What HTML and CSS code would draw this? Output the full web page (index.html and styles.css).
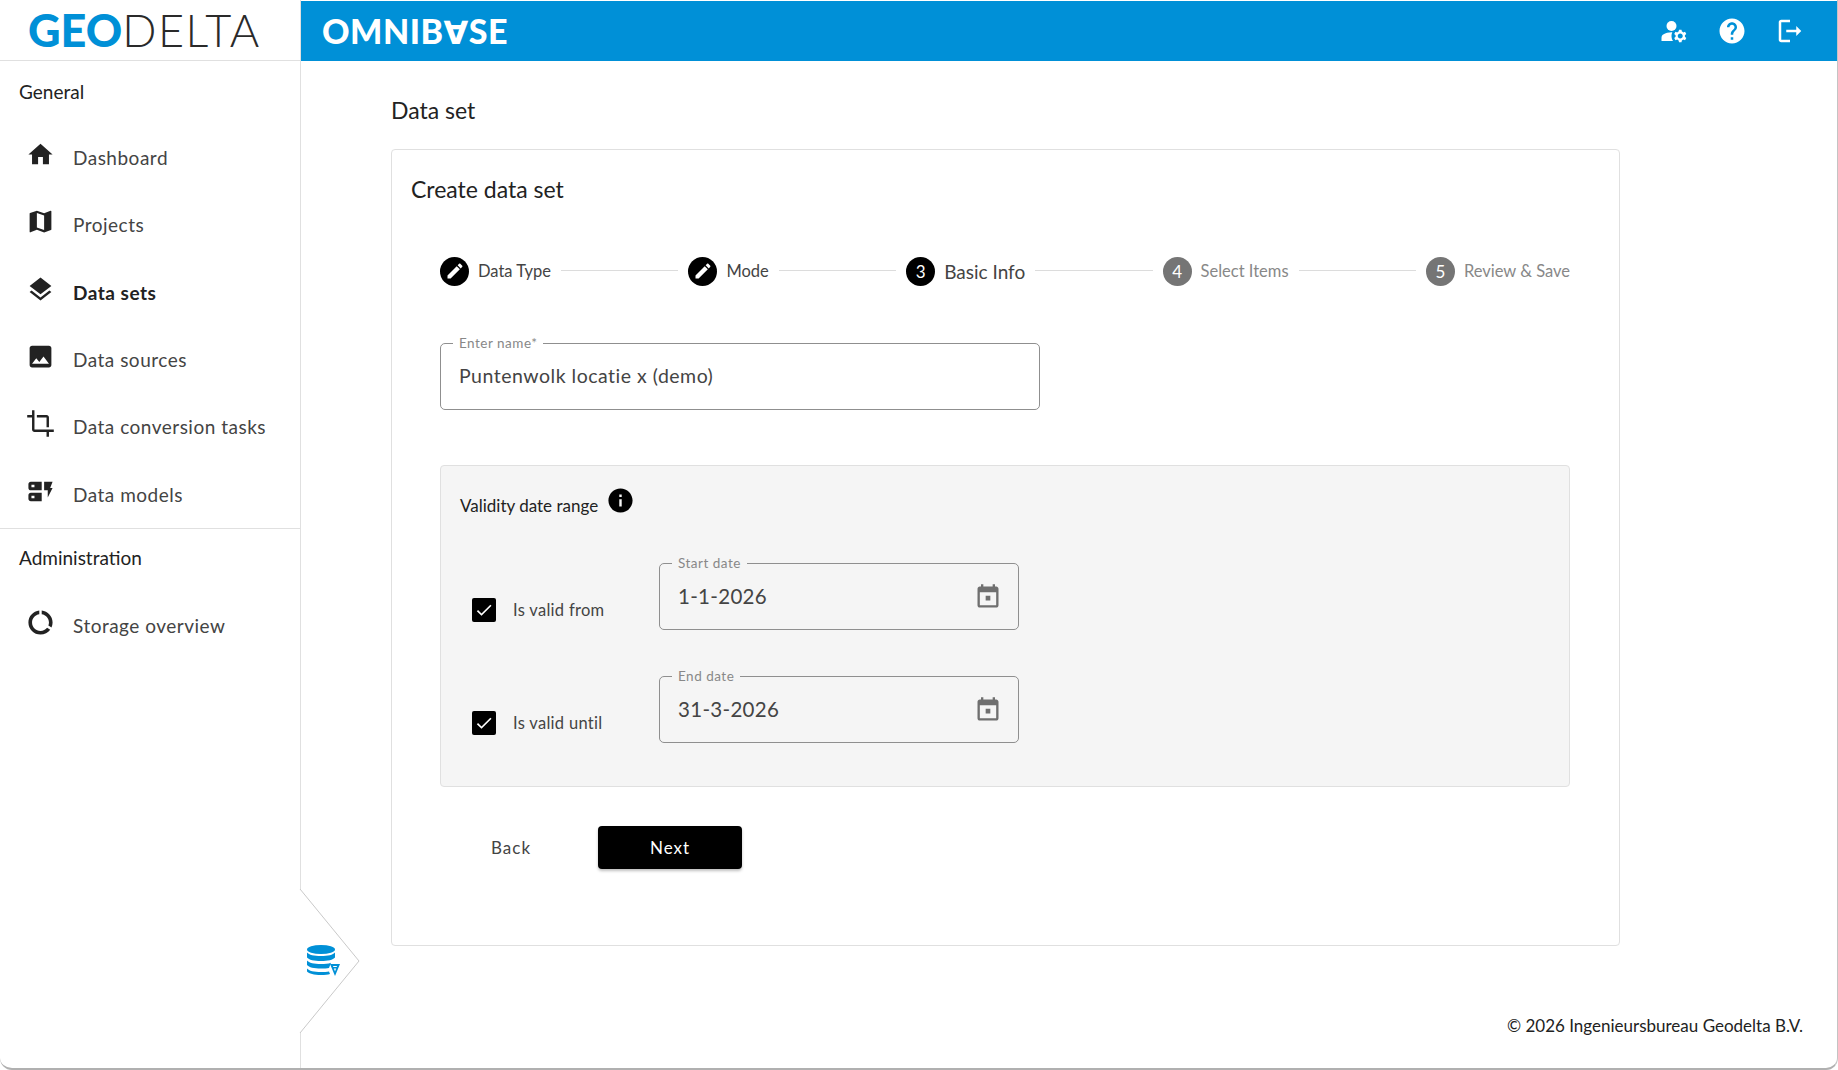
FILE: index.html
```html
<!DOCTYPE html>
<html lang="en">
<head>
  <meta charset="UTF-8">
  <meta name="viewport" content="width=device-width, initial-scale=1.0">
  <title>Omnibase - Data set</title>
  <link rel="stylesheet" href="styles.css">
</head>
<body>

  <svg class="sprite" xmlns="http://www.w3.org/2000/svg">
    <symbol id="i-home" viewBox="0 0 24 24"><path d="M10 20v-6h4v6h5v-8h3L12 3 2 12h3v8z"/></symbol>
    <symbol id="i-map" viewBox="0 0 24 24"><path d="M20.5 3l-.16.03L15 5.1 9 3 3.36 4.9c-.21.07-.36.25-.36.48V20.5c0 .28.22.5.5.5l.16-.03L9 18.9l6 2.1 5.64-1.9c.21-.07.36-.25.36-.48V3.5c0-.28-.22-.5-.5-.5zM15 19l-6-2.11V5l6 2.11V19z"/></symbol>
    <symbol id="i-layers" viewBox="0 0 24 24"><path d="M11.99 18.54l-7.37-5.73L3 14.07l9 7 9-7-1.63-1.27-7.38 5.74zM12 16l7.36-5.73L21 9l-9-7-9 7 1.63 1.27L12 16z"/></symbol>
    <symbol id="i-image" viewBox="0 0 24 24"><path d="M21 19V5c0-1.1-.9-2-2-2H5c-1.1 0-2 .9-2 2v14c0 1.1.9 2 2 2h14c1.1 0 2-.9 2-2zM8.5 13.5l2.5 3.01L14.5 12l4.5 6H5l3.5-4.5z"/></symbol>
    <symbol id="i-crop" viewBox="0 0 24 24"><path d="M17 15h2V7c0-1.1-.9-2-2-2H9v2h8v8zM7 17V1H5v4H1v2h4v10c0 1.1.9 2 2 2h10v4h2v-4h4v-2H7z"/></symbol>
    <symbol id="i-models" viewBox="0 0 24 24"><path fill-rule="evenodd" d="M13 4H4c-1.1 0-2 .9-2 2v3c0 1.1.9 2 2 2h9V4zM7 8.5H4.5v-2H7v2zM13 13H4c-1.1 0-2 .9-2 2v3c0 1.1.9 2 2 2h9v-7zM7 17.500H4.500v-2H7v2zM15 4h7l-2 5h2l-4 8v-6h-3z"/></symbol>
    <symbol id="i-usage" viewBox="0 0 24 24"><path d="M13 2.05v3.03c3.39.49 6 3.39 6 6.92 0 .9-.18 1.75-.48 2.54l2.6 1.53c.56-1.24.88-2.62.88-4.07 0-5.18-3.95-9.45-9-9.95zM12 19c-3.87 0-7-3.13-7-7 0-3.53 2.61-6.43 6-6.92V2.05c-5.06.5-9 4.76-9 9.95 0 5.52 4.47 10 9.99 10 3.31 0 6.24-1.61 8.06-4.09l-2.6-1.53C16.17 17.98 14.21 19 12 19z"/></symbol>
    <symbol id="i-account" viewBox="0 0 24 24"><circle cx="10" cy="8" r="4"/><path d="M10.67 13.02c-.22-.01-.44-.02-.67-.02-2.42 0-4.68.67-6.61 1.82-.88.52-1.39 1.5-1.39 2.53V20h9.26c-.79-1.13-1.26-2.51-1.26-4 0-1.07.25-2.07.67-2.98zM20.75 16c0-.22-.03-.42-.06-.63l1.14-1.01-1-1.73-1.45.49c-.32-.27-.68-.48-1.08-.63L18 11h-2l-.3 1.49c-.4.15-.76.36-1.08.63l-1.45-.49-1 1.73 1.14 1.01c-.03.21-.06.41-.06.63s.03.42.06.63l-1.14 1.01 1 1.73 1.45-.49c.32.27.68.48 1.08.63L16 21h2l.3-1.49c.4-.15.76-.36 1.08-.63l1.45.49 1-1.73-1.14-1.01c.03-.21.06-.41.06-.63zM17 18c-1.1 0-2-.9-2-2s.9-2 2-2 2 .9 2 2-.9 2-2 2z"/></symbol>
    <symbol id="i-help" viewBox="0 0 24 24"><path d="M12 2C6.48 2 2 6.48 2 12s4.48 10 10 10 10-4.48 10-10S17.52 2 12 2zm1 17h-2v-2h2v2zm2.07-7.75l-.9.92C13.45 12.9 13 13.5 13 15h-2v-.5c0-1.1.45-2.1 1.17-2.83l1.24-1.26c.37-.36.59-.86.59-1.41 0-1.1-.9-2-2-2s-2 .9-2 2H8c0-2.21 1.79-4 4-4s4 1.79 4 4c0 .88-.36 1.68-.93 2.25z"/></symbol>
    <symbol id="i-logout" viewBox="0 0 24 24"><path d="M5 5h7V3H5c-1.100 0-2 .9-2 2v14c0 1.100.9 2 2 2h7v-2H5V5zm16 7l-4-4v3H9v2h8v3l4-4z"/></symbol>
    <symbol id="i-edit" viewBox="0 0 24 24"><path d="M3 17.250V21h3.750L17.810 9.940l-3.750-3.750L3 17.250zM20.710 7.040c.39-.39.39-1.020 0-1.410l-2.340-2.340c-.39-.39-1.020-.39-1.410 0l-1.830 1.830 3.750 3.750 1.830-1.830z"/></symbol>
    <symbol id="i-event" viewBox="0 0 24 24"><path d="M19 3h-1V1h-2v2H8V1H6v2H5c-1.110 0-1.990.9-1.990 2L3 19c0 1.100.89 2 2 2h14c1.100 0 2-.9 2-2V5c0-1.100-.9-2-2-2zm0 16H5V8h14v11zM10 11h4v4h-4z"/></symbol>
    <symbol id="i-info" viewBox="0 0 24 24"><path d="M12 2C6.480 2 2 6.480 2 12s4.480 10 10 10 10-4.480 10-10S17.520 2 12 2zm1 15h-2v-6h2v6zm0-8h-2V7h2v2z"/></symbol>
    <symbol id="i-check" viewBox="0 0 24 24"><path d="M9 16.170L4.830 12l-1.420 1.410L9 19 21 7l-1.410-1.410z"/></symbol>
  </svg>

  <div class="app">
    <header class="topbar">
      <div class="brand"><span class="brand-geo">GEO</span><span class="brand-delta">DELTA</span></div>
      <div class="appbar">
        <div class="product">OMNIB<span class="product-a">∀</span>SE</div>
        <div class="appbar-actions">
          <svg class="icon-top"><use href="#i-account"/></svg>
          <svg class="icon-top"><use href="#i-help"/></svg>
          <svg class="icon-top"><use href="#i-logout"/></svg>
        </div>
      </div>
    </header>

    <div class="body-row">
      <aside class="sidebar">
        <div class="nav-section">
          <div class="nav-title">General</div>
          <a class="nav-item"><svg class="nav-icon"><use href="#i-home"/></svg>Dashboard</a>
          <a class="nav-item"><svg class="nav-icon"><use href="#i-map"/></svg>Projects</a>
          <a class="nav-item active"><svg class="nav-icon"><use href="#i-layers"/></svg>Data sets</a>
          <a class="nav-item"><svg class="nav-icon"><use href="#i-image"/></svg>Data sources</a>
          <a class="nav-item"><svg class="nav-icon"><use href="#i-crop"/></svg>Data conversion tasks</a>
          <a class="nav-item"><svg class="nav-icon"><use href="#i-models"/></svg>Data models</a>
        </div>
        <div class="nav-section second">
          <div class="nav-title">Administration</div>
          <a class="nav-item"><svg class="nav-icon"><use href="#i-usage"/></svg>Storage overview</a>
        </div>

        <!-- chevron sits over the sidebar edge -->
        <div class="switcher">
          <svg class="switcher-shape" viewBox="0 0 62 145">
            <path d="M1 0 L60 72 L1 144" fill="#fff" stroke="#c9c9c9" stroke-width="1"/>
          </svg>
          <svg class="switcher-logo" viewBox="0 0 34 32">
            <ellipse cx="14" cy="4.500" rx="14" ry="4.500" fill="#0090d7"/>
            <path d="M0 7.500c2 2.500 7 3.500 14 3.500s12-1 14-3.500v5c-2 2.500-7 3.500-14 3.500S2 15 0 12.500z" fill="#0090d7"/>
            <path d="M0 15.500c2 2.500 7 3.500 14 3.500 4 0 7-.3 10-1.300l-2 5.300c-2 .4-5 .5-8 .5-7 0-12-1-14-3.500z" fill="#0090d7"/>
            <path d="M0 23.500c2 2.500 7 3.500 14 3.500 3 0 6-.2 8-.6l1 2.600c-2 .6-5 1-9 1-7 0-12-1.500-14-3.500z" fill="#0090d7"/>
            <path d="M23 19h10l-5 12z M26 21l2 5.500 2-5.500z" fill="#0090d7" fill-rule="evenodd"/>
            <rect x="25" y="22" width="6" height="1.500" fill="#0090d7"/>
          </svg>
        </div>
      </aside>

      <main class="content">
        <div class="page">
          <h1 class="page-title">Data set</h1>

          <section class="card">
            <h2 class="card-title">Create data set</h2>

            <div class="stepper">
              <div class="step done"><span class="step-num"><svg class="icon-edit"><use href="#i-edit"/></svg></span><span class="step-label">Data Type</span></div>
              <div class="step-line"></div>
              <div class="step done"><span class="step-num"><svg class="icon-edit"><use href="#i-edit"/></svg></span><span class="step-label">Mode</span></div>
              <div class="step-line"></div>
              <div class="step current"><span class="step-num">3</span><span class="step-label">Basic Info</span></div>
              <div class="step-line"></div>
              <div class="step"><span class="step-num">4</span><span class="step-label">Select Items</span></div>
              <div class="step-line"></div>
              <div class="step"><span class="step-num">5</span><span class="step-label">Review &amp; Save</span></div>
            </div>

            <div class="field name-field">
              <label class="field-label">Enter name*</label>
              <input class="field-input" type="text" value="Puntenwolk locatie x (demo)">
            </div>

            <div class="range-panel">
              <div class="range-title">Validity date range <svg class="icon-info"><use href="#i-info"/></svg></div>

              <div class="range-row">
                <div class="check-group">
                  <span class="checkbox"><svg><use href="#i-check"/></svg></span>
                  <span class="check-label">Is valid from</span>
                </div>
                <div class="field date-field">
                  <label class="field-label">Start date</label>
                  <input class="field-input" type="text" value="1-1-2026">
                  <svg class="icon-date"><use href="#i-event"/></svg>
                </div>
              </div>

              <div class="range-row">
                <div class="check-group">
                  <span class="checkbox"><svg><use href="#i-check"/></svg></span>
                  <span class="check-label">Is valid until</span>
                </div>
                <div class="field date-field">
                  <label class="field-label">End date</label>
                  <input class="field-input" type="text" value="31-3-2026">
                  <svg class="icon-date"><use href="#i-event"/></svg>
                </div>
              </div>
            </div>

            <div class="actions">
              <button class="btn btn-back">Back</button>
              <button class="btn btn-next">Next</button>
            </div>
          </section>
        </div>

        <footer class="footer">© 2026 Ingenieursbureau Geodelta B.V.</footer>
      </main>
    </div>
  </div>

</body>
</html>
```

FILE: styles.css
```css
* {
  box-sizing: border-box;
}

html, body {
  margin: 0;
  height: 100%;
  background: #fff;
}

body {
  font-family: "Lato", "Open Sans", sans-serif;
  color: #333;
}

.sprite {
  display: none;
}

.app {
  display: flex;
  flex-direction: column;
  height: 100vh;
  overflow: hidden;
  border-right: 1px solid #c4c4c4;
  border-bottom: 2px solid #b0b0b0;
  border-radius: 0 0 12px 12px;
}

/* top bar */
.topbar {
  display: flex;
  height: 61px;
  flex-shrink: 0;
}

.brand {
  width: 301px;
  padding-left: 28px;
  display: flex;
  align-items: center;
  font-size: 45px;
  line-height: 1;
  border-bottom: 1px solid #e0e0e0;
  border-right: 1px solid #e0e0e0;
  white-space: nowrap;
}

.brand-geo {
  font-weight: 900;
  color: #0090d7;
}

.brand-delta {
  font-weight: 300;
  color: #2a2a2a;
  letter-spacing: 1.5px;
}

.appbar {
  flex: 1;
  margin-top: 1px;
  background: #0090d7;
  display: flex;
  align-items: center;
  justify-content: space-between;
  padding: 0 32px 0 21px;
}

.product {
  font-size: 34px;
  font-weight: 900;
  color: #fff;
  letter-spacing: 0.5px;
}

.product-a {
  font-family: "DejaVu Sans", sans-serif;
  font-weight: 700;
  font-size: 32px;
}

.appbar-actions {
  display: flex;
  gap: 28px;
}

.icon-top {
  width: 30px;
  height: 30px;
  fill: #fff;
}

/* sidebar */
.body-row {
  flex: 1;
  display: flex;
  min-height: 0;
}

.sidebar {
  position: relative;
  width: 301px;
  flex-shrink: 0;
  border-right: 1px solid #e0e0e0;
}

.nav-section {
  padding-top: 19px;
}

.nav-section.second {
  padding-top: 17px;
  border-top: 1px solid #e0e0e0;
}

.nav-title {
  height: 24px;
  line-height: 24px;
  padding-left: 19px;
  margin-bottom: 20px;
  font-size: 19px;
  color: #222;
}

.nav-section.second .nav-title {
  margin-bottom: 22px;
}

.nav-item {
  display: flex;
  align-items: center;
  height: 67.3px;
  padding-left: 26px;
  gap: 18px;
  font-size: 19px;
  letter-spacing: 0.5px;
  color: #444;
}

.nav-item.active {
  font-weight: 700;
  color: #222;
}

.nav-icon {
  width: 29px;
  height: 29px;
  margin-top: -6px;
  fill: #222;
}

.switcher {
  position: absolute;
  left: 299px;
  bottom: 34px;
  width: 62px;
  height: 145px;
}

.switcher-shape {
  display: block;
  width: 62px;
  height: 145px;
}

.switcher-logo {
  position: absolute;
  left: 8px;
  top: 56px;
  width: 34px;
  height: 32px;
}

/* main area */
.content {
  flex: 1;
  display: flex;
  flex-direction: column;
  padding: 36px 34px 32px 90px;
}

.page {
  width: 1229px;
}

.page-title {
  margin: 0 0 26px;
  line-height: 26px;
  font-size: 23px;
  font-weight: 400;
  color: #222;
}

.card {
  height: 797px;
  padding: 26px 49px 0 19px;
  border: 1px solid #e0e0e0;
  border-radius: 4px;
}

.card-title {
  margin: 0 0 54px;
  line-height: 26px;
  font-size: 23px;
  font-weight: 400;
  color: #222;
}

/* stepper */
.stepper {
  display: flex;
  align-items: center;
  height: 30px;
  margin-left: 29px;
  margin-right: 0;
  margin-bottom: 57px;
}

.step {
  display: flex;
  align-items: center;
  gap: 9px;
  font-size: 16.500px;
  color: #888;
  white-space: nowrap;
}

.step-num {
  display: flex;
  align-items: center;
  justify-content: center;
  width: 29px;
  height: 29px;
  border-radius: 50%;
  background: #757575;
  color: #fff;
  font-size: 17px;
}

.step.done,
.step.current {
  color: #444;
}

.step.done .step-num,
.step.current .step-num {
  background: #000;
}

.step.current .step-label {
  font-size: 19px;
}

.icon-edit {
  width: 20px;
  height: 20px;
  fill: #fff;
}

.step-line {
  flex: 1;
  height: 1px;
  margin: -2px 10px 0;
  background: #dcdcdc;
}

/* outlined fields */
.field {
  position: relative;
  display: flex;
  align-items: center;
  height: 67px;
  padding: 0 18px;
  border: 1px solid #8f8f8f;
  border-radius: 5px;
}

.name-field {
  width: 600px;
  margin-left: 29px;
  background: #fff;
}

.field-label {
  position: absolute;
  left: 12px;
  top: -8px;
  padding: 0 6px;
  height: 14px;
  line-height: 14px;
  font-size: 13.500px;
  letter-spacing: 0.5px;
  color: #888;
  background: #fff;
}

.field-input {
  flex: 1;
  min-width: 0;
  margin-top: -2px;
  padding: 0;
  border: none;
  outline: none;
  background: transparent;
  font-family: inherit;
  font-size: 19.500px;
  letter-spacing: 0.5px;
  color: #444;
}

/* date range panel */
.range-panel {
  height: 322px;
  margin: 55px 0 39px 29px;
  padding: 27px 19px 0;
  background: #f5f5f5;
  border: 1px solid #e0e0e0;
  border-radius: 4px;
}

.range-title {
  display: flex;
  align-items: flex-start;
  gap: 8px;
  height: 24px;
  padding-top: 2px;
  font-size: 17px;
  color: #222;
  white-space: nowrap;
}

.icon-info {
  width: 29px;
  height: 29px;
  margin-top: -9px;
  fill: #000;
}

.range-row {
  display: flex;
  margin-top: 46px;
}

.range-row + .range-row {
  margin-top: 46px;
}

.check-group {
  display: flex;
  align-items: center;
  gap: 17px;
  width: 199px;
  padding-left: 12px;
  margin-top: 26px;
}

.checkbox {
  display: flex;
  align-items: center;
  justify-content: center;
  width: 24px;
  height: 24px;
  border-radius: 2px;
  background: #000;
}

.checkbox svg {
  width: 20px;
  height: 20px;
  fill: #fff;
}

.check-label {
  font-size: 16.500px;
  letter-spacing: 0.3px;
  color: #444;
}

.date-field {
  width: 360px;
}

.date-field .field-label {
  background: #f5f5f5;
}

.date-field .field-input {
  font-size: 20.500px;
  letter-spacing: 0.3px;
}

.icon-date {
  width: 28px;
  height: 28px;
  flex-shrink: 0;
  margin-right: -2px;
  fill: #6f6f6f;
}

/* buttons */
.actions {
  display: flex;
  gap: 16px;
  margin-left: 29px;
}

.btn {
  height: 43px;
  border: none;
  border-radius: 4px;
  font-family: inherit;
  font-size: 17px;
  letter-spacing: 1px;
  cursor: pointer;
}

.btn-back {
  width: 142px;
  background: transparent;
  color: #444;
}

.btn-next {
  width: 144px;
  background: #000;
  color: #fff;
  box-shadow: 0 2px 3px rgba(0, 0, 0, 0.25);
}

.footer {
  margin-top: auto;
  text-align: right;
  font-size: 17px;
  color: #222;
}
```
